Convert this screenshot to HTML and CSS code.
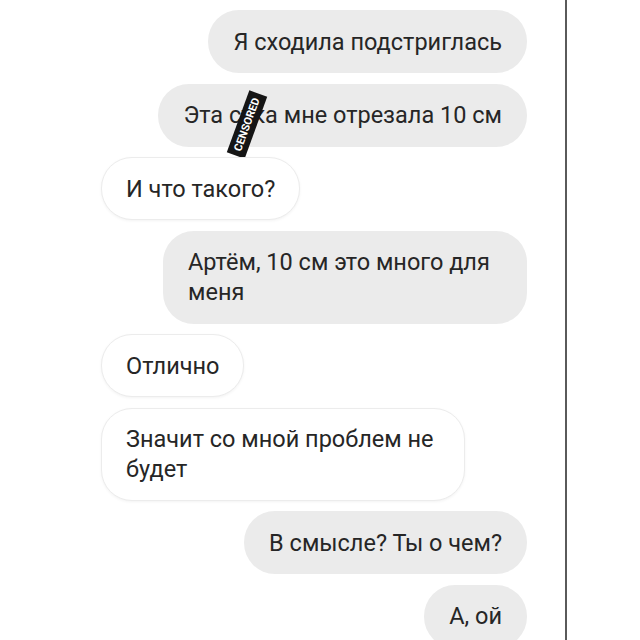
FILE: index.html
```html
<!DOCTYPE html>
<html lang="ru">
<head>
<meta charset="utf-8">
<link rel="stylesheet" href="styles.css">
</head>
<body>
<div class="screen">
  <div class="chat">
    <div class="msg out"><div class="bubble">Я сходила подстриглась</div></div>
    <div class="msg out"><div class="bubble one-line">Эта сука мне отрезала 10 см<span class="censor">CENSORED</span></div></div>
    <div class="msg in"><div class="bubble">И что такого?</div></div>
    <div class="msg out"><div class="bubble">Артём, 10 см это много для меня</div></div>
    <div class="msg in"><div class="bubble">Отлично</div></div>
    <div class="msg in"><div class="bubble">Значит со мной проблем не будет</div></div>
    <div class="msg out"><div class="bubble">В смысле? Ты о чем?</div></div>
    <div class="msg out"><div class="bubble">А, ой</div></div>
  </div>
</div>
</body>
</html>
```
FILE: styles.css
```css
html, body {
  margin: 0;
  padding: 0;
  background: #fff;
  height: 640px;
  overflow: hidden;
}
.screen {
  width: 565px;
  height: 640px;
  border-right: 2px solid #5a5a5a;
  box-sizing: content-box;
}
.chat {
  display: flex;
  flex-direction: column;
  gap: 10.5px;
  padding: 10px 38px 0 101px;
  font-family: Roboto, "Noto Sans", sans-serif;
  font-size: 23.5px;
  line-height: 30px;
  color: #262626;
}
.msg {
  display: flex;
}
.msg.out {
  justify-content: flex-end;
}
.msg.in {
  justify-content: flex-start;
}
.bubble {
  position: relative;
  max-width: 314px;
  padding: 16.5px 25px;
  border-radius: 31px;
}
.bubble.one-line {
  max-width: none;
  white-space: nowrap;
}
.out .bubble {
  background: #ebebeb;
}
.in .bubble {
  background: #fff;
  border: 1px solid #ececec;
  box-shadow: 0 1px 3px rgba(0,0,0,0.05);
  padding: 15.5px 24px;
}
.censor {
  position: absolute;
  left: 56px;
  top: 31px;
  width: 66px;
  height: 19px;
  background: #151515;
  color: #fff;
  font-size: 11px;
  line-height: 19px;
  font-weight: 700;
  text-align: center;
  transform: rotate(-70deg);
  transform-origin: center;
}
```
